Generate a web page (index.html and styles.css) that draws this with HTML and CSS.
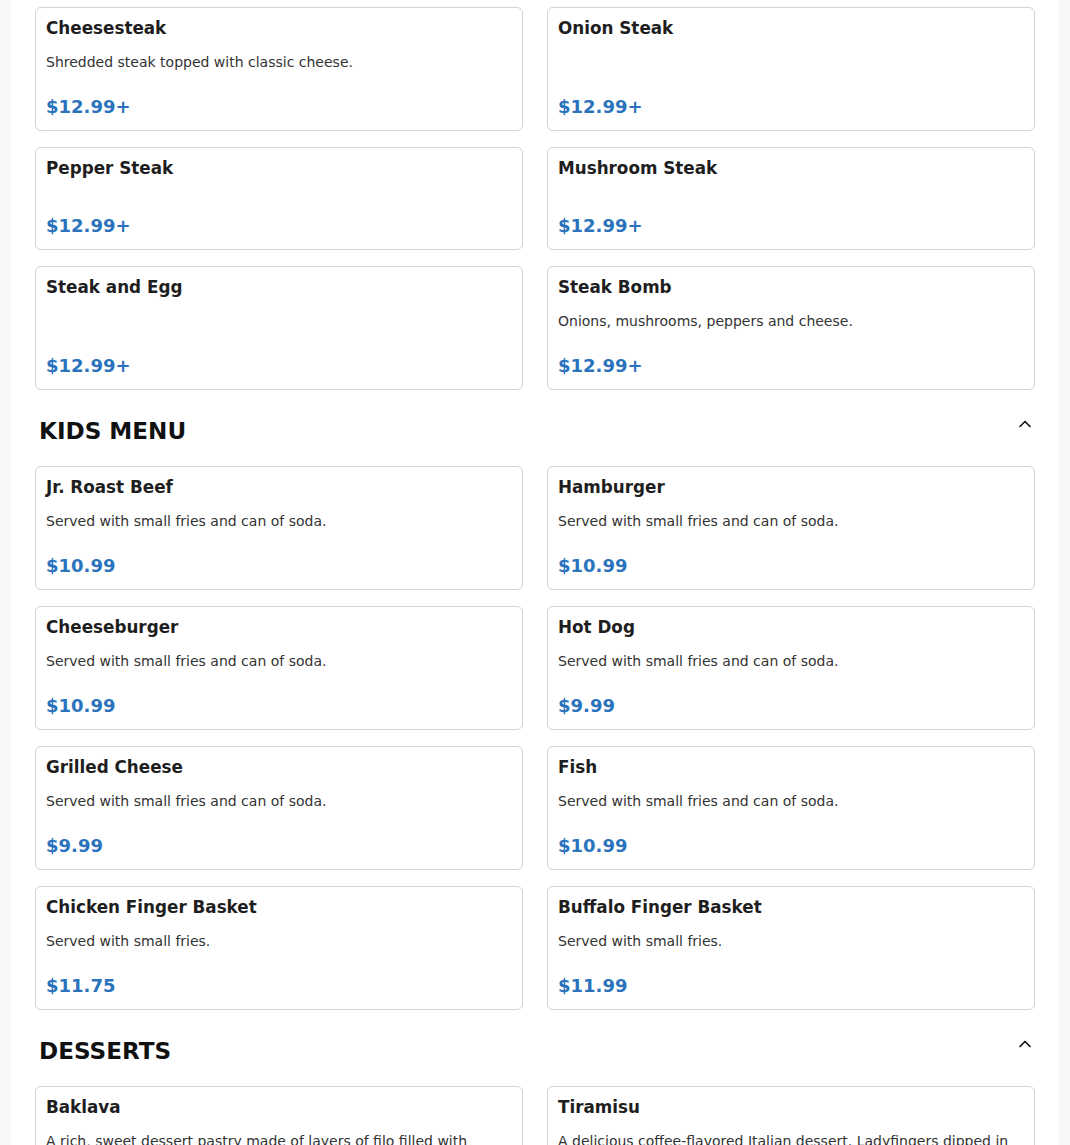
FILE: index.html
```html
<!DOCTYPE html>
<html lang="en">
<head>
<meta charset="utf-8">
<title>Menu</title>
<link rel="stylesheet" href="styles.css">
</head>
<body>
<main class="page">
  <section class="section section-first">
    <div class="grid">
      <div class="card"><h3 class="name">Cheesesteak</h3><p class="desc">Shredded steak topped with classic cheese.</p><div class="price">$12.99+</div></div>
      <div class="card"><h3 class="name">Onion Steak</h3><div class="price">$12.99+</div></div>
      <div class="card"><h3 class="name">Pepper Steak</h3><div class="price">$12.99+</div></div>
      <div class="card"><h3 class="name">Mushroom Steak</h3><div class="price">$12.99+</div></div>
      <div class="card"><h3 class="name">Steak and Egg</h3><div class="price">$12.99+</div></div>
      <div class="card"><h3 class="name">Steak Bomb</h3><p class="desc">Onions, mushrooms, peppers and cheese.</p><div class="price">$12.99+</div></div>
    </div>
  </section>

  <section class="section">
    <div class="section-header">
      <h2 class="section-title">KIDS MENU</h2>
      <button class="toggle" aria-label="Collapse">
        <svg width="20" height="20" viewBox="0 0 24 24" fill="none" stroke="currentColor" stroke-width="2" stroke-linecap="round" stroke-linejoin="round"><path d="m18 15-6-6-6 6"/></svg>
      </button>
    </div>
    <div class="grid">
      <div class="card"><h3 class="name">Jr. Roast Beef</h3><p class="desc">Served with small fries and can of soda.</p><div class="price">$10.99</div></div>
      <div class="card"><h3 class="name">Hamburger</h3><p class="desc">Served with small fries and can of soda.</p><div class="price">$10.99</div></div>
      <div class="card"><h3 class="name">Cheeseburger</h3><p class="desc">Served with small fries and can of soda.</p><div class="price">$10.99</div></div>
      <div class="card"><h3 class="name">Hot Dog</h3><p class="desc">Served with small fries and can of soda.</p><div class="price">$9.99</div></div>
      <div class="card"><h3 class="name">Grilled Cheese</h3><p class="desc">Served with small fries and can of soda.</p><div class="price">$9.99</div></div>
      <div class="card"><h3 class="name">Fish</h3><p class="desc">Served with small fries and can of soda.</p><div class="price">$10.99</div></div>
      <div class="card"><h3 class="name">Chicken Finger Basket</h3><p class="desc">Served with small fries.</p><div class="price">$11.75</div></div>
      <div class="card"><h3 class="name">Buffalo Finger Basket</h3><p class="desc">Served with small fries.</p><div class="price">$11.99</div></div>
    </div>
  </section>

  <section class="section">
    <div class="section-header">
      <h2 class="section-title">DESSERTS</h2>
      <button class="toggle" aria-label="Collapse">
        <svg width="20" height="20" viewBox="0 0 24 24" fill="none" stroke="currentColor" stroke-width="2" stroke-linecap="round" stroke-linejoin="round"><path d="m18 15-6-6-6 6"/></svg>
      </button>
    </div>
    <div class="grid">
      <div class="card"><h3 class="name">Baklava</h3><p class="desc">A rich, sweet dessert pastry made of layers of filo filled with chopped nuts and sweetened and held together with syrup or honey.</p><div class="price">$4.99</div></div>
      <div class="card"><h3 class="name">Tiramisu</h3><p class="desc">A delicious coffee-flavored Italian dessert. Ladyfingers dipped in coffee, layered with a whipped mixture of eggs, sugar and mascarpone cheese.</p><div class="price">$5.99</div></div>
    </div>
  </section>
</main>
</body>
</html>
```

FILE: styles.css
```css
* {
  box-sizing: border-box;
}

html, body {
  margin: 0;
  padding: 0;
}

body {
  background: #f8f8f8;
  font-family: "DejaVu Sans", Verdana, sans-serif;
  color: #222;
}

.page {
  margin: 0 11px;
  background: #ffffff;
  padding: 7px 24px 40px;
  min-height: 1145px;
}

.section {
  margin-top: 27px;
}

.section-first {
  margin-top: 0;
}

.section-header {
  display: flex;
  align-items: flex-start;
  justify-content: space-between;
  height: 28px;
  margin-bottom: 21px;
  padding-left: 4px;
}

.section-title {
  margin: 0;
  font-size: 23.1px;
  line-height: 28px;
  font-weight: bold;
  color: #111;
}

.toggle {
  border: 0;
  background: transparent;
  padding: 0;
  margin-top: -3px;
  width: 20px;
  height: 20px;
  color: #111;
  display: flex;
  cursor: pointer;
}

.grid {
  display: grid;
  grid-template-columns: 1fr 1fr;
  column-gap: 24px;
  row-gap: 16px;
}

.card {
  display: flex;
  flex-direction: column;
  border: 1px solid #d3d3d3;
  border-radius: 6px;
  padding: 10px;
  background: #fff;
}

.name {
  margin: 0 0 14px;
  font-size: 16.8px;
  line-height: 20px;
  font-weight: bold;
  color: #1e1e1e;
}

.desc {
  margin: 0;
  font-size: 14px;
  line-height: 21px;
  color: #333;
}

.price {
  margin-top: auto;
  padding-top: 21px;
  font-size: 18px;
  line-height: 26px;
  font-weight: bold;
  color: #2a73bc;
}
```
